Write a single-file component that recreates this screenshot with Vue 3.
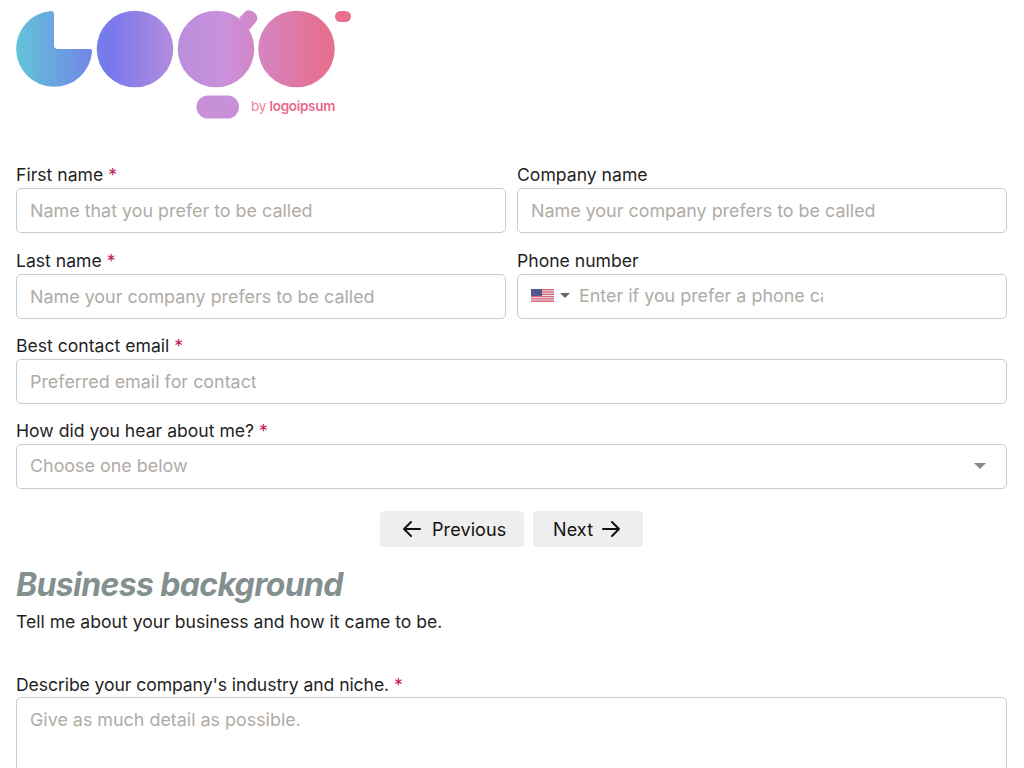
<script setup>
const topFields = [
  { label: 'First name', required: true, placeholder: 'Name that you prefer to be called' },
  { label: 'Company name', required: false, placeholder: 'Name your company prefers to be called' },
  { label: 'Last name', required: true, placeholder: 'Name your company prefers to be called' },
  { label: 'Phone number', required: false, placeholder: 'Enter if you prefer a phone call', phone: true },
]
</script>

<template>
  <div class="page">
    <svg class="logo" width="370" height="130" viewBox="0 0 370 130" role="img" aria-label="Logo by logoipsum">
      <defs>
        <linearGradient id="lg" gradientUnits="userSpaceOnUse" x1="16" y1="0" x2="335" y2="0">
          <stop offset="0" stop-color="#62c4d8" />
          <stop offset="0.29" stop-color="#7678ec" />
          <stop offset="0.51" stop-color="#b98edd" />
          <stop offset="0.66" stop-color="#cb90da" />
          <stop offset="0.96" stop-color="#e57090" />
        </linearGradient>
      </defs>
      <g fill="url(#lg)">
        <path d="M51 11 Q54 11 54 14 V45 Q54 49 58 49 H89.500 Q92.500 49 92 52 A38 38 0 1 1 51 11 Z" />
        <circle cx="135" cy="49" r="38.300" />
        <circle cx="216" cy="49" r="38.300" />
        <path d="M239 18 L246 11 Q250 9 255 13 Q259 17 256 22 L249 30 Z" />
        <circle cx="296.500" cy="49" r="38.300" />
      </g>
      <rect x="335" y="11" width="16" height="11" rx="5.500" fill="#e8708f" />
      <rect x="196.500" y="95.500" width="42.500" height="23" rx="11.500" fill="#c990da" />
      <text x="251" y="111" class="logo-text"><tspan class="logo-by">by</tspan> <tspan class="logo-name">logoipsum</tspan></text>
    </svg>

    <form class="form" @submit.prevent>
      <div class="grid">
        <div v-for="field in topFields" :key="field.label" class="field">
          <label class="label">{{ field.label }} <span v-if="field.required" class="req">*</span></label>
          <div v-if="field.phone" class="control phone">
            <svg class="flag" width="23" height="13" viewBox="0 0 23 13">
              <rect width="23" height="13" fill="#f2f2f4" />
              <g fill="#d9657a">
                <rect width="23" height="1.400" />
                <rect y="2.300" width="23" height="1.400" />
                <rect y="4.600" width="23" height="1.400" />
                <rect y="6.900" width="23" height="1.400" />
                <rect y="9.200" width="23" height="1.400" />
                <rect y="11.500" width="23" height="1.500" />
              </g>
              <rect width="11" height="7" fill="#55568f" />
            </svg>
            <span class="caret small"></span>
            <input class="phone-input" type="tel" :placeholder="field.placeholder" />
          </div>
          <input v-else class="control text" type="text" :placeholder="field.placeholder" />
        </div>
      </div>

      <div class="field">
        <label class="label">Best contact email <span class="req">*</span></label>
        <input class="control text" type="email" placeholder="Preferred email for contact" />
      </div>

      <div class="field">
        <label class="label">How did you hear about me? <span class="req">*</span></label>
        <div class="control select">
          <span class="select-text">Choose one below</span>
          <span class="caret"></span>
        </div>
      </div>

      <div class="actions">
        <button class="btn prev" type="button">
          <svg width="24" height="24" viewBox="0 0 24 24" fill="none" stroke="#111" stroke-width="2" stroke-linecap="round" stroke-linejoin="round"><path d="M20 12H4M11 5l-7 7 7 7" /></svg>
          Previous
        </button>
        <button class="btn next" type="button">
          Next
          <svg width="24" height="24" viewBox="0 0 24 24" fill="none" stroke="#111" stroke-width="2" stroke-linecap="round" stroke-linejoin="round"><path d="M4 12h16M13 5l7 7-7 7" /></svg>
        </button>
      </div>

      <h2 class="heading">Business background</h2>
      <p class="intro">Tell me about your business and how it came to be.</p>

      <div class="field last">
        <label class="label">Describe your company's industry and niche. <span class="req">*</span></label>
        <textarea class="control area" placeholder="Give as much detail as possible."></textarea>
      </div>
    </form>
  </div>
</template>

<style>
html, body { margin: 0; background: #fff; overflow: hidden; }
</style>

<style scoped>
.page {
  height: 768px;
  overflow: hidden;
  box-sizing: border-box;
  padding: 0 17px 0 16px;
  font-family: Inter, "Liberation Sans", sans-serif;
  font-size: 17.600px;
  color: #1f1f1f;
}
.logo { display: block; margin-left: -16px; }
.logo-text { font-size: 13.500px; letter-spacing: -0.300px; }
.logo-by { fill: #ee7f9d; font-weight: 400; }
.logo-name { fill: #e8688c; font-weight: 600; }
.form { display: flex; flex-direction: column; padding-top: 32px; }
.grid { display: grid; grid-template-columns: 1fr 1fr; grid-template-rows: 86px 85px; column-gap: 11px; }
.field { display: flex; flex-direction: column; height: 85px; }
.label { display: block; height: 26px; line-height: 26px; color: #1f1f1f; }
.req { color: #c2185b; }
.control {
  box-sizing: border-box;
  width: 100%;
  height: 45px;
  border: 1px solid #c6ccd4;
  border-radius: 5px;
  background: #fff;
  font: inherit;
  font-size: 17.900px;
  color: #1f1f1f;
  outline: none;
}
.text { padding: 0 13px; }
input::placeholder, textarea::placeholder { color: #b0aba6; opacity: 1; }
.phone { display: flex; align-items: center; padding: 0 13px 2px; }
.flag { flex: none; }
.caret {
  flex: none;
  width: 0;
  height: 0;
  border-left: 6px solid transparent;
  border-right: 6px solid transparent;
  border-top: 6px solid #8a8a8a;
}
.caret.small { margin-left: 6px; border-left-width: 5.500px; border-right-width: 5.500px; border-top-width: 5px; border-top-color: #666; }
.phone-input {
  width: 244px;
  margin-left: 9px;
  padding: 0;
  border: 0;
  outline: 0;
  background: transparent;
  font: inherit;
}
.select { display: flex; align-items: center; justify-content: space-between; padding: 0 20px 2px 13px; }
.select-text { color: #b0aba6; }
.actions { display: flex; justify-content: center; gap: 9px; margin-top: 8px; }
.btn {
  display: inline-flex;
  align-items: center;
  box-sizing: border-box;
  height: 36px;
  border: 0;
  border-radius: 4px;
  background: #eeeeee;
  font: inherit;
  font-size: 18px;
  font-weight: 400;
  letter-spacing: 0.100px;
  color: #111;
}
.prev { width: 144px; padding: 0 0 0 20px; gap: 8px; }
.next { width: 110px; padding: 0 0 0 20px; gap: 6px; }
.heading {
  margin: 20px 0 0;
  height: 36px;
  line-height: 36px;
  font-size: 32px;
  font-weight: 700;
  font-style: italic;
  letter-spacing: -0.640px;
  color: #84908f;
}
.intro { margin: 6px 0 0; line-height: 26px; color: #1f1f1f; }
.last { height: auto; margin-top: 37px; }
.last .label { height: 25px; letter-spacing: -0.090px; }
.area {
  height: 150px;
  padding: 11px 13px;
  resize: none;
}
</style>
